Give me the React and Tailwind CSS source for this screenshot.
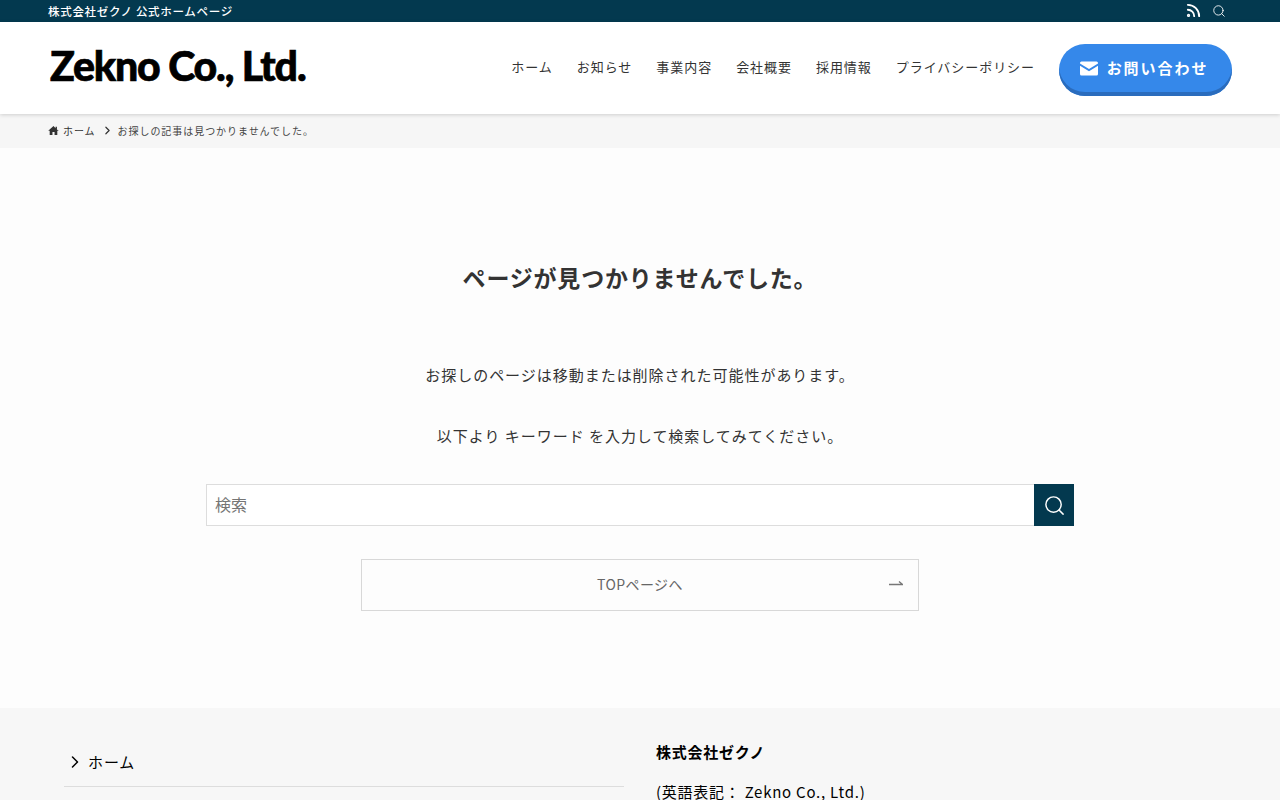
import { ChevronRight, Rss, Search } from 'lucide-react';

const cjk = "font-['Noto_Sans_CJK_JP','Noto_Sans',sans-serif]";
const navItems = ['ホーム', 'お知らせ', '事業内容', '会社概要', '採用情報', 'プライバシーポリシー'];

function HomeIcon() {
  return (
    <svg viewBox="0 0 24 24" className="h-[11px] w-[11px] fill-[#333]">
      <path d="M12 2 0.5 12.5h3.2V22h6v-6.5h4.6V22h6v-9.5h3.2L19.5 9.6V4h-3v2.9z" />
    </svg>
  );
}

function MailIcon() {
  return (
    <svg viewBox="0 0 18 14" className="h-[15px] w-[18px] fill-white">
      <path d="M1.5 0h15A1.5 1.5 0 0 1 18 1.5v.6L9 7.6 0 2.1v-.6A1.5 1.5 0 0 1 1.5 0z" />
      <path d="M0 4.2v8.3A1.5 1.5 0 0 0 1.5 14h15a1.5 1.5 0 0 0 1.5-1.5V4.2L9 9.7z" />
    </svg>
  );
}

function HalfArrow() {
  return (
    <svg viewBox="0 0 14 6" className="h-[6px] w-[14px] fill-none stroke-[#777]" strokeWidth="1.3">
      <path d="M0 4.5h13.5L10 1.5" />
    </svg>
  );
}

export default function App() {
  return (
    <div className={`h-[800px] overflow-hidden bg-[#fdfdfd] text-[#333] ${cjk}`}>
      <div className="flex h-[22px] items-center justify-between bg-[#03394f] pl-12 pr-[54px] text-white">
        <p className="mt-[1px] text-[11.5px] font-medium tracking-[0.06em]">株式会社ゼクノ 公式ホームページ</p>
        <div className="mb-[1px] flex items-center gap-[10px]">
          <Rss size={17} strokeWidth={2.6} />
          <Search size={14} strokeWidth={1.5} />
        </div>
      </div>

      <header className="relative z-10 flex h-[92px] items-center justify-between bg-white pl-12 pr-12 shadow-[0_1px_4px_rgba(0,0,0,0.16)]">
        <span className="mb-[5px] pl-[2px] font-['Lato',sans-serif] text-[41px] font-black tracking-[-0.028em] text-black [-webkit-text-stroke:0.7px_black]">
          Zekno Co., Ltd.
        </span>
        <nav className="flex items-center">
          <ul className="mb-[2px] mr-6 flex gap-6 text-[13px] tracking-[0.95px]">
            {navItems.map((item) => (
              <li key={item}>{item}</li>
            ))}
          </ul>
          <a className="mt-1 flex h-[52px] w-[173px] items-center justify-center gap-[9px] rounded-[26px] bg-[#3588ea] pb-1 pr-[3px] text-[15px] font-bold tracking-[0.13em] text-white shadow-[inset_0_-4px_0_#2a6cbd]">
            <MailIcon />
            お問い合わせ
          </a>
        </nav>
      </header>

      <div className="flex h-[34px] items-center bg-[#f6f6f6] pb-[2px] pl-12 text-[10px] tracking-[0.095em] text-[#444]">
        <HomeIcon />
        <span className="ml-[4px] text-[#333]">ホーム</span>
        <ChevronRight size={13} strokeWidth={2.2} className="ml-[5px] mr-[4px] text-[#333]" />
        <span>お探しの記事は見つかりませんでした。</span>
      </div>

      <main className="flex h-[560px] flex-col items-center">
        <h1 className="mt-[110px] text-[23px] font-bold leading-[38px] tracking-[0.035em]">
          ページが見つかりませんでした。
        </h1>
        <p className="mt-[66px] text-[15px] leading-[26px] tracking-[0.065em]">
          お探しのページは移動または削除された可能性があります。
        </p>
        <p className="mt-[35px] text-[15px] leading-[26px] tracking-[0.065em]">
          以下より キーワード を入力して検索してみてください。
        </p>
        <form className="mt-[35px] flex h-[42px] w-[868px]">
          <input
            placeholder="検索"
            className="min-w-0 flex-1 border border-[#ddd] border-r-0 bg-white px-2 pb-[2px] text-[16px] placeholder:text-[#757575]"
          />
          <button type="button" className="flex w-[40px] items-center justify-center bg-[#03394f] text-white">
            <Search size={23} strokeWidth={1.5} />
          </button>
        </form>
        <a className="relative mt-[33px] flex h-[52px] w-[558px] items-center justify-center border border-[#d8d8d8] pb-[2px] text-[14px] tracking-[0.03em] text-[#666]">
          TOPページへ
          <span className="absolute right-[15px] top-[20px]">
            <HalfArrow />
          </span>
        </a>
      </main>

      <footer className="flex h-[200px] bg-[#f7f7f7] pl-16 text-black">
        <div className="w-[560px] pt-[33px]">
          <div className="flex h-[46px] items-start border-b border-[#ddd] pt-[9px] text-[15px] leading-[24px] tracking-[0.06em]">
            <ChevronRight size={20} strokeWidth={1.8} className="ml-[1px] mr-[3px] mt-[2px]" />
            ホーム
          </div>
        </div>
        <div className="ml-8 pt-[31px] text-[15px] tracking-[0.05em]">
          <p className="font-bold leading-[26px]">株式会社ゼクノ</p>
          <p className="mt-[14px] leading-[26px]">(英語表記： Zekno Co., Ltd.)</p>
        </div>
      </footer>
    </div>
  );
}
